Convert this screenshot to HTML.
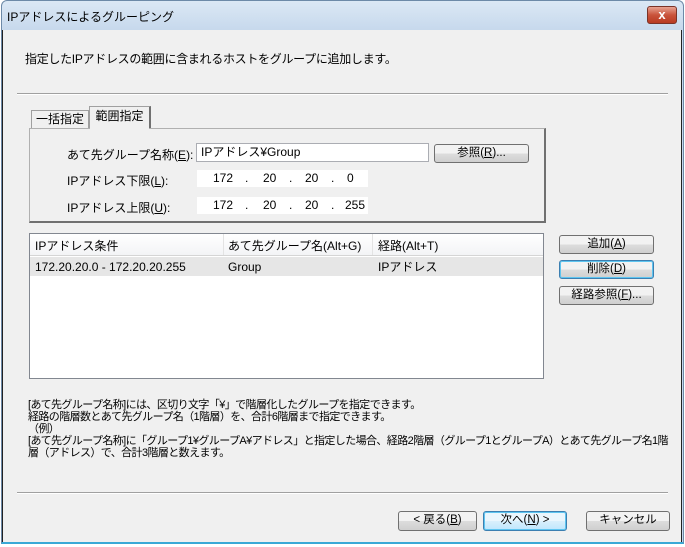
<!DOCTYPE html>
<html><head><meta charset="utf-8"><style>
*{box-sizing:border-box;margin:0;padding:0}
body{width:685px;height:547px;background:#fff;font-family:"Liberation Sans","Noto Sans CJK JP",sans-serif;font-size:12px;color:#000;position:relative;overflow:hidden}
.a{position:absolute;white-space:nowrap}
.win{position:absolute;left:1px;top:0;width:683px;height:544px;background:linear-gradient(#dbe8f5,#c6d8ec 30px);border:1px solid #6d8aa8;border-bottom:2px solid #3aa9d6;border-radius:6px 6px 0 0}
.client{position:absolute;left:2px;top:30px;width:680px;height:512px;background:#f0f0f0;border-left:1px solid #222;border-right:1px solid #222}
.btn{position:absolute;height:19px;border:1px solid #707070;border-radius:3px;background:linear-gradient(#f2f2f2 50%,#dddddd 50%,#cfcfcf);text-align:center;line-height:17px;font-size:11.5px}
.inp{position:absolute;background:#fff;border:1px solid #f0f0f0;height:19px;line-height:17px}
u{text-decoration:underline}
.r{line-height:14px}
</style></head><body>
<div class="win"></div>
<div class="a" style="left:7px;top:8px;font-size:12px">IPアドレスによるグルーピング</div>
<div class="a" style="left:647px;top:6px;width:30px;height:18px;border:1px solid #7a3328;border-radius:3px;background:linear-gradient(#e8a392,#c9533b 50%,#b83a22);color:#fff;text-align:center;font-weight:bold;line-height:16px;font-size:13px">x</div>
<div class="client"></div>
<div class="a" style="left:25px;top:50px;letter-spacing:-0.3px">指定したIPアドレスの範囲に含まれるホストをグループに追加します。</div>
<div class="a" style="left:17px;top:93px;width:651px;height:1px;background:#a0a0a0"></div>
<div class="a" style="left:17px;top:94px;width:651px;height:1px;background:#fff"></div>
<!-- tabs -->
<div class="a" style="left:31px;top:110px;width:58px;height:19px;border:1px solid #a0a0a0;border-bottom:none;line-height:17px;text-align:center;background:#f0f0f0">一括指定</div>
<div class="a" style="left:89px;top:106px;width:62px;height:23px;border:1px solid #a0a0a0;border-right:2px solid #707070;border-bottom:none;line-height:19px;text-align:center;background:#f0f0f0">範囲指定</div>
<div class="a" style="left:29px;top:128px;width:517px;height:95px;border:1px solid #b0b0b0;border-right:2px solid #707070;border-bottom:2px solid #707070"></div>
<div class="a" style="left:90px;top:128px;width:59px;height:2px;background:#f0f0f0"></div>
<div class="a" style="left:67px;top:146px">あて先グループ名称(<u>E</u>):</div>
<div class="inp" style="left:196px;top:143px;width:233px;border-color:#abadb3;padding-left:4px">IPアドレス¥Group</div>
<div class="btn" style="left:434px;top:144px;width:95px">参照(<u>R</u>)...</div>
<div class="a" style="left:67px;top:172px">IPアドレス下限(<u>L</u>):</div>
<div class="inp" style="left:196px;top:169px;width:173px"><span class="a" style="left:16px">172</span><span class="a" style="left:48px">.</span><span class="a" style="left:66px">20</span><span class="a" style="left:92px">.</span><span class="a" style="left:108px">20</span><span class="a" style="left:134px">.</span><span class="a" style="left:150px">0</span></div>
<div class="a" style="left:67px;top:199px">IPアドレス上限(<u>U</u>):</div>
<div class="inp" style="left:196px;top:196px;width:173px"><span class="a" style="left:16px">172</span><span class="a" style="left:48px">.</span><span class="a" style="left:66px">20</span><span class="a" style="left:92px">.</span><span class="a" style="left:108px">20</span><span class="a" style="left:134px">.</span><span class="a" style="left:148px">255</span></div>
<!-- list -->
<div class="a" style="left:29px;top:233px;width:515px;height:146px;background:#fff;border:1px solid #828790"></div>
<div class="a" style="left:30px;top:234px;width:513px;height:21px;background:linear-gradient(#fff,#f3f4f6)"></div>
<div class="a" style="left:30px;top:255px;width:513px;height:1px;background:#d5d5d5"></div>
<div class="a" style="left:223px;top:234px;width:1px;height:21px;background:#e3e3e3"></div>
<div class="a" style="left:372px;top:234px;width:1px;height:21px;background:#e3e3e3"></div>
<div class="a r" style="left:35px;top:239px">IPアドレス条件</div>
<div class="a r" style="left:228px;top:239px">あて先グループ名(Alt+G)</div>
<div class="a r" style="left:378px;top:239px">経路(Alt+T)</div>
<div class="a" style="left:30px;top:257px;width:513px;height:19px;background:#e6e6e6"></div>
<div class="a r" style="left:35px;top:260px">172.20.20.0 - 172.20.20.255</div>
<div class="a r" style="left:228px;top:260px">Group</div>
<div class="a r" style="left:378px;top:260px">IPアドレス</div>
<div class="btn" style="left:559px;top:235px;width:95px">追加(<u>A</u>)</div>
<div class="btn" style="left:559px;top:260px;width:95px;border-color:#3c7fb1;box-shadow:inset 0 0 0 1px #5ec5f0">削除(<u>D</u>)</div>
<div class="btn" style="left:559px;top:286px;width:95px">経路参照(<u>F</u>)...</div>
<div class="a" style="left:28px;top:399px;font-size:11px;line-height:12px;letter-spacing:-0.6px">[あて先グループ名称]には、区切り文字「¥」で階層化したグループを指定できます。<br>経路の階層数とあて先グループ名（1階層）を、合計6階層まで指定できます。<br>（例）<br>[あて先グループ名称]に「グループ1¥グループA¥アドレス」と指定した場合、経路2階層（グループ1とグループA）とあて先グループ名1階<br>層（アドレス）で、合計3階層と数えます。</div>
<div class="a" style="left:17px;top:492px;width:651px;height:1px;background:#a0a0a0"></div>
<div class="a" style="left:17px;top:493px;width:651px;height:1px;background:#fff"></div>
<div class="btn" style="left:398px;top:511px;width:79px;height:20px">&lt; 戻る(<u>B</u>)</div>
<div class="btn" style="left:483px;top:511px;width:84px;height:20px;border-color:#3c7fb1;box-shadow:inset 0 0 0 1px #5ec5f0;background:linear-gradient(#eaf6fd 50%,#d9f0fc 50%,#bee6fd)">次へ(<u>N</u>) &gt;</div>
<div class="btn" style="left:586px;top:511px;width:84px;height:20px">キャンセル</div>
</body></html>
